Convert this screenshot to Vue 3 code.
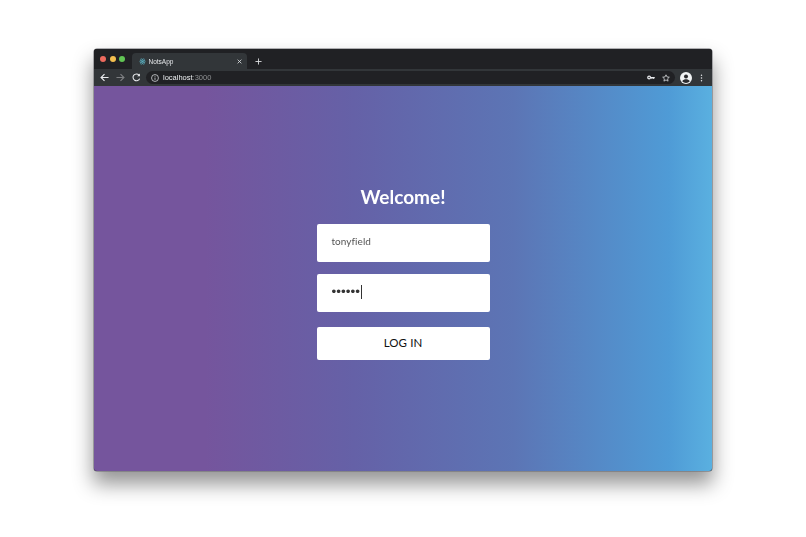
<script setup>
const dots = ['#ed6a5e', '#f4bf4f', '#61c554']
</script>

<template>
  <div class="stage">
    <div class="window">
      <div class="tabbar">
        <div class="lights">
          <span v-for="d in dots" :key="d" class="light" :style="{ background: d }"></span>
        </div>
        <div class="tab">
          <svg class="favicon" viewBox="0 0 12 12" width="7" height="7" fill="none" stroke="#5fb7c9" stroke-width="0.8">
            <ellipse cx="6" cy="6" rx="5.5" ry="2.2"/>
            <ellipse cx="6" cy="6" rx="5.5" ry="2.2" transform="rotate(60 6 6)"/>
            <ellipse cx="6" cy="6" rx="5.5" ry="2.2" transform="rotate(120 6 6)"/>
            <circle cx="6" cy="6" r="1" fill="#5fb7c9"/>
          </svg>
          <span class="tab-title">NotsApp</span>
          <svg class="tab-close" viewBox="0 0 8 8" width="5" height="5" stroke="#dfe1e4" stroke-width="1.3">
            <path d="M1 1l6 6M7 1l-6 6"/>
          </svg>
        </div>
        <svg class="plus" viewBox="0 0 8 8" width="7" height="7" stroke="#dfe1e4" stroke-width="1">
          <path d="M4 .5v7M.5 4h7"/>
        </svg>
      </div>
      <div class="toolbar">
        <svg class="nav" viewBox="0 0 10 10" width="9" height="9" fill="none" stroke="#e8eaed" stroke-width="1.3">
          <path d="M9.5 5H1.5M5 1.2L1.2 5 5 8.8"/>
        </svg>
        <svg class="nav" viewBox="0 0 10 10" width="9" height="9" fill="none" stroke="#7d7f82" stroke-width="1.3">
          <path d="M.5 5h8M5 1.2L8.8 5 5 8.8"/>
        </svg>
        <svg class="nav" viewBox="0 0 10 10" width="9" height="9" fill="none" stroke="#e8eaed" stroke-width="1.2">
          <path d="M8.5 6.2A3.8 3.8 0 1 1 7.8 2.3"/>
          <path d="M8.8.6v3H5.8z" fill="#e8eaed" stroke="none"/>
        </svg>
        <div class="omnibox">
          <svg viewBox="0 0 10 10" width="8" height="8" fill="none" stroke="#e8eaed" stroke-width="0.9">
            <circle cx="5" cy="5" r="4.3"/>
            <path d="M5 4.4v3M5 2.4v1"/>
          </svg>
          <span class="url"><b>localhost</b>:3000</span>
          <span class="spacer"></span>
          <svg viewBox="0 0 12 8" width="8" height="5" fill="#e8eaed">
            <path d="M3 .8a3.2 3.2 0 1 1-.01 6.4A3.2 3.2 0 0 1 3 .8zm0 2a1.2 1.2 0 1 0 0 2.4 1.2 1.2 0 0 0 0-2.4zM6 3h6v2h-1v1.5H9.5V5H8.2v1.2H6.7V5H6z"/>
          </svg>
          <svg viewBox="0 0 12 12" width="8" height="8" fill="none" stroke="#e8eaed" stroke-width="1.1">
            <path d="M6 1.2l1.5 3.2 3.5.4-2.6 2.4.7 3.5L6 8.9l-3.1 1.8.7-3.5L1 4.8l3.5-.4z"/>
          </svg>
        </div>
        <svg class="avatar" viewBox="0 0 12 12" width="12" height="12">
          <circle cx="6" cy="6" r="6" fill="#f1f3f4"/>
          <circle cx="6" cy="4.6" r="2" fill="#292a2d"/>
          <path d="M2.2 9.2C3 7.6 4.6 7.2 6 7.2s3 .4 3.8 2A5 5 0 0 1 6 11a5 5 0 0 1-3.8-1.8z" fill="#292a2d"/>
        </svg>
        <svg class="menu" viewBox="0 0 4 12" width="3" height="8" fill="#e8eaed">
          <circle cx="2" cy="2" r="1.1"/><circle cx="2" cy="6" r="1.1"/><circle cx="2" cy="10" r="1.1"/>
        </svg>
      </div>
      <main class="page">
        <h1 class="welcome">Welcome!</h1>
        <div class="field"><span class="value">tonyfield</span></div>
        <div class="field"><span class="dots">••••••</span><span class="caret"></span></div>
        <button class="login">LOG IN</button>
      </main>
    </div>
  </div>
</template>

<style scoped>
.stage {
  box-sizing: border-box;
  width: 806px;
  height: 537px;
  padding: 49px 94px 66px 94px;
  background: #fff;
  overflow: hidden;
  font-family: Lato, "Open Sans", sans-serif;
}
.window {
  height: 422px;
  display: flex;
  flex-direction: column;
  border-radius: 3px;
  overflow: hidden;
  background: #202124;
  box-shadow: 0 0 0 0.5px #6a6a70, 0 12px 20px 1px rgba(0, 0, 0, 0.42);
}
.tabbar {
  height: 20px;
  flex: none;
  display: flex;
  align-items: flex-end;
  background: #202124;
}
.lights {
  display: flex;
  gap: 3.6px;
  width: 38px;
  padding: 7px 0 0 6px;
  box-sizing: border-box;
  height: 100%;
  align-items: flex-start;
}
.light {
  width: 6px;
  height: 6px;
  border-radius: 50%;
  flex: none;
}
.tab {
  width: 115px;
  height: 16px;
  background: #323639;
  border-radius: 4px 4px 0 0;
  display: flex;
  align-items: center;
  padding: 0 5px 0 6.5px;
  box-sizing: border-box;
  gap: 3px;
}
.tab-title {
  font: 6.5px "Liberation Sans", Arial, sans-serif;
  color: #e3e5e8;
  flex: 1;
  will-change: opacity;
}
.plus {
  margin: 0 0 4px 8px;
}
.toolbar {
  height: 17px;
  flex: none;
  display: flex;
  align-items: center;
  background: #323639;
  padding: 0 9px 0 5.5px;
  gap: 7px;
  box-sizing: border-box;
}
.omnibox {
  flex: 1;
  height: 13px;
  margin-left: -1.5px;
  background: #202124;
  border-radius: 7px;
  display: flex;
  align-items: center;
  gap: 4px;
  padding: 0 5px 0 5px;
}
.url {
  font: 7.5px "Liberation Sans", Arial, sans-serif;
  color: #8f9193;
  will-change: opacity;
}
.url b {
  font-weight: 400;
  color: #eceef0;
}
.spacer {
  flex: 1;
}
.omnibox svg + svg {
  margin-left: 3px;
}
.avatar {
  margin-left: -2px;
}
.menu {
  margin-left: 1.5px;
}
.page {
  flex: 1;
  display: flex;
  flex-direction: column;
  align-items: center;
  background: linear-gradient(90deg, #75559d 0%, #75559d 18%, #6561a7 42%, #5c75b5 68%, #4f9bd6 93%, #5ab0e0 100%);
}
.welcome {
  margin: 97px 0 14px;
  height: 27px;
  line-height: 27px;
  font-size: 19px;
  font-weight: 700;
  color: #fff;
  will-change: opacity;
}
.field {
  width: 173px;
  height: 38px;
  margin-bottom: 12px;
  padding: 0 0 3px 15px;
  box-sizing: border-box;
  background: #fff;
  border-radius: 2px;
  display: flex;
  align-items: center;
}
.value {
  margin-bottom: 2px;
  font-size: 10px;
  color: #555;
  letter-spacing: 0.05px;
  will-change: opacity;
}
.dots {
  font: 13.5px/1 "Liberation Sans", Arial, sans-serif;
  color: #333;
  will-change: opacity;
}
.caret {
  width: 1px;
  height: 14px;
  margin-left: 1px;
  background: #333;
}
.login {
  width: 173px;
  height: 33px;
  margin-top: 3px;
  padding: 0 0 2px;
  border: 0;
  border-radius: 2px;
  background: #fff;
  color: #111;
  font-family: Lato, sans-serif;
  font-size: 11.5px;
  font-weight: 400;
  letter-spacing: 0.1px;
}
</style>

<style>
body { background: #fff; }
</style>
